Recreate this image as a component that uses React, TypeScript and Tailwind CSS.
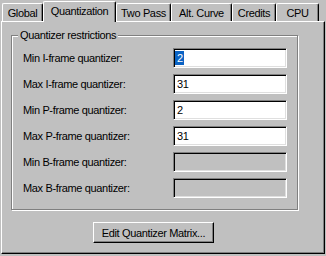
const tabs = [
  { label: "Global", w: "w-[41px]" },
  { label: "Quantization", w: "w-[73px]", active: true },
  { label: "Two Pass", w: "w-[55px]" },
  { label: "Alt. Curve", w: "w-[61px]" },
  { label: "Credits", w: "w-[44px]" },
  { label: "CPU", w: "w-[43px]" },
];

const rows = [
  { label: "Min I-frame quantizer:", value: "2", selected: true },
  { label: "Max I-frame quantizer:", value: "31" },
  { label: "Min P-frame quantizer:", value: "2" },
  { label: "Max P-frame quantizer:", value: "31" },
  { label: "Min B-frame quantizer:", value: "", disabled: true },
  { label: "Max B-frame quantizer:", value: "", disabled: true },
];

function Tab({ label, w, active }: { label: string; w: string; active?: boolean }) {
  if (active) {
    return (
      <div
        className={`${w} relative z-10 -mb-[1px] flex h-[21px] items-center justify-center rounded-t-[2px] border-t border-l border-r border-t-white border-l-white border-r-black bg-[#c0c0c0] pb-[3px] shadow-[inset_-1px_0_0_#808080]`}
      >
        {label}
      </div>
    );
  }
  return (
    <div
      className={`${w} flex h-[18px] items-center justify-center rounded-t-[2px] border-t border-l border-r border-t-white border-l-white border-r-black pt-[1px] shadow-[inset_-1px_0_0_#808080]`}
    >
      {label}
    </div>
  );
}

function Field({ value, selected, disabled }: { value: string; selected?: boolean; disabled?: boolean }) {
  return (
    <div
      className={`ml-auto flex h-[20px] w-[114px] items-center border border-t-[#808080] border-l-[#808080] border-b-white border-r-white shadow-[inset_1px_1px_0_#000,inset_-1px_-1px_0_#dfdfdf] ${
        disabled ? "bg-[#c0c0c0]" : "bg-white"
      }`}
    >
      {value && (
        <span
          className={`ml-[1px] flex h-[14px] items-center pl-[2px] pr-[1px] ${
            selected ? "bg-[#0b63c4] text-white" : ""
          }`}
        >
          {value}
        </span>
      )}
    </div>
  );
}

export default function App() {
  return (
    <div className="h-[256px] w-[326px] overflow-hidden bg-[#c0c0c0] pt-[1px] font-['Liberation_Sans',Arial,sans-serif] text-[11px] leading-[14px] tracking-[-0.35px] text-black">
      {/* tab strip */}
      <div className="flex h-[20px] items-end pl-[2px]">
        {tabs.map((t) => (
          <Tab key={t.label} {...t} />
        ))}
      </div>

      {/* tab page */}
      <div className="ml-[1px] h-[233px] w-[324px] border-t border-l border-r border-b border-t-white border-l-white border-r-black border-b-black shadow-[inset_-1px_-1px_0_#808080]">
        <div className="ml-[9px] mt-[13px] w-[287px]">
          <div className="relative border border-[#808080] pt-[12px] pr-[10px] pb-[11px] pl-[11px] shadow-[inset_1px_1px_0_#fff,1px_1px_0_#fff]">
            <span className="absolute left-[6px] top-[-8px] bg-[#c0c0c0] px-[2px]">
              Quantizer restrictions
            </span>
            <div className="flex flex-col gap-[6px]">
              {rows.map((r) => (
                <div key={r.label} className="flex h-[20px] items-center">
                  <span>{r.label}</span>
                  <Field value={r.value} selected={r.selected} disabled={r.disabled} />
                </div>
              ))}
            </div>
          </div>

          <button className="ml-[82px] mt-[12px] flex h-[21px] w-[121px] items-center justify-center border border-t-white border-l-white border-b-black border-r-black bg-[#c0c0c0] shadow-[inset_-1px_-1px_0_#808080]">
            Edit Quantizer Matrix...
          </button>
        </div>
      </div>
    </div>
  );
}
